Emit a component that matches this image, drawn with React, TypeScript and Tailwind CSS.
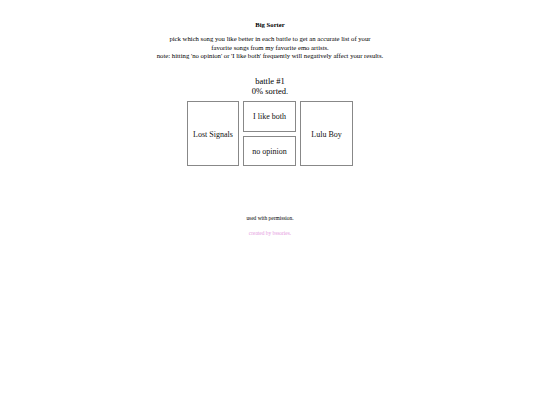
const choices = {
  left: "Lost Signals",
  right: "Lulu Boy",
};

export default function App() {
  return (
    <div className="min-h-screen w-full bg-white text-black font-['Liberation_Serif',serif] flex flex-col items-center">
      <h1 className="mt-[21px] text-[6.7px] font-bold leading-[8px]">Big Sorter</h1>

      <div className="mt-[6px] text-center text-[6.7px] leading-[8.5px]">
        <p>
          pick which song you like better in each battle to get an accurate list of your
          <br />
          favorite songs from my favorite emo artists.
        </p>
        <p>note: hitting 'no opinion' or 'I like both' frequently will negatively affect your results.</p>
      </div>

      <div className="mt-[15px] text-center text-[8.5px] leading-[10px]">
        <div>battle #1</div>
        <div>0% sorted.</div>
      </div>

      <div className="mt-[5px] flex gap-[4px] text-[8px] text-[#111]">
        <button className="w-[52px] h-[65px] pt-[3px] border border-[#888] flex items-center justify-center">
          {choices.left}
        </button>
        <div className="flex flex-col gap-[4px]">
          <button className="w-[53px] h-[31px] pt-[1px] border border-[#888] flex items-center justify-center">
            I like both
          </button>
          <button className="w-[53px] h-[30px] pt-[2px] border border-[#888] flex items-center justify-center">
            no opinion
          </button>
        </div>
        <button className="w-[53px] h-[65px] pt-[3px] border border-[#888] flex items-center justify-center">
          {choices.right}
        </button>
      </div>

      <p className="mt-[49px] text-[5.4px] leading-[7px]">used with permission.</p>
      <p className="mt-[8px] text-[5.4px] leading-[7px] text-[#e59be0]">created by bssories.</p>
    </div>
  );
}
